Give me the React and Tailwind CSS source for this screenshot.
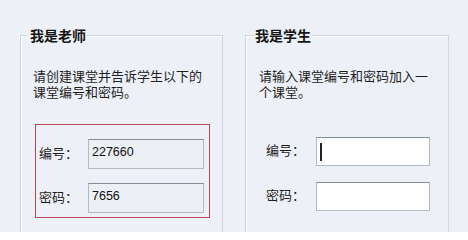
const FONT = { fontFamily: '"Noto Sans CJK SC", "Liberation Sans", sans-serif' };

function Box({ value, disabled, caret }) {
  return (
    <div
      className={`h-full w-full flex items-center pl-[3px] pb-[3px] border border-[#b3bac3] border-t-[#838d97] text-[12.5px] text-[#111] ${
        disabled ? 'bg-[#eceff3]' : 'bg-white'
      }`}
      style={{ fontFamily: '"Liberation Sans", sans-serif' }}
    >
      {caret && <span className="block w-[2px] h-[18px] bg-[#222] mt-[3px]" />}
      {value}
    </div>
  );
}

function Field({ label, value, disabled, caret, boxW, boxH, labelW }) {
  return (
    <div className="flex items-center" style={{ height: boxH }}>
      <span className={`${labelW} text-[13px] text-[#1d1d1d] pb-[3px]`}>{label}</span>
      <div className={`${boxW} h-full`}>
        <Box value={value} disabled={disabled} caret={caret} />
      </div>
    </div>
  );
}

function Group({ title, children, className }) {
  return (
    <fieldset
      className={`h-[230px] border border-[#d0d6de] shadow-[inset_1px_1px_0_#fbfcfe] ${className}`}
    >
      <legend className="ml-[8px] px-[1px] text-[14px] leading-[20px] font-bold text-[#161616]">
        {title}
      </legend>
      {children}
    </fieldset>
  );
}

export default function App() {
  return (
    <div
      className="w-[468px] h-[232px] overflow-hidden bg-[#edf1f7] flex pl-[20px] pt-[25px] gap-[22px]"
      style={FONT}
    >
      <Group title="我是老师" className="w-[203px] shrink-0">
        <p className="mt-[23px] ml-[12px] text-[13px] leading-[16px] text-[#1e1e1e]">
          请创建课堂并告诉学生以下的
          <br />
          课堂编号和密码。
        </p>
        <div className="mt-[24px] ml-[14px] w-[175px] border border-[#b94a55] pt-[14px] pb-[4px] pl-[3px] flex flex-col gap-[14px]">
          <Field label="编号：" value="227660" disabled boxW="w-[116px]" boxH={30} labelW="w-[49px]" />
          <Field label="密码：" value="7656" disabled boxW="w-[116px]" boxH={30} labelW="w-[49px]" />
        </div>
      </Group>

      <Group title="我是学生" className="w-[204px] shrink-0">
        <p className="mt-[23px] ml-[13px] text-[13px] leading-[16px] text-[#1e1e1e]">
          请输入课堂编号和密码加入一
          <br />
          个课堂。
        </p>
        <div className="mt-[37px] ml-[20px] flex flex-col gap-[16px]">
          <Field label="编号：" caret boxW="w-[114px]" boxH={29} labelW="w-[50px]" />
          <Field label="密码：" boxW="w-[114px]" boxH={29} labelW="w-[50px]" />
        </div>
      </Group>
    </div>
  );
}
